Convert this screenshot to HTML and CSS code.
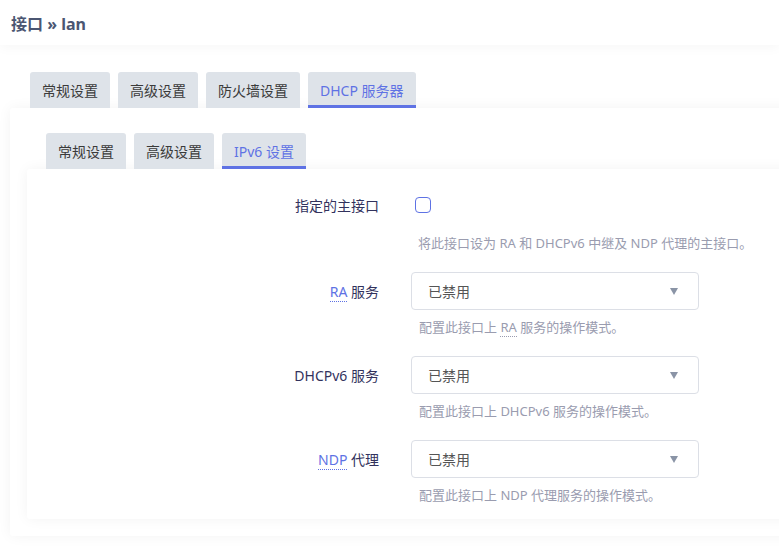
FILE: index.html
```html
<!DOCTYPE html>
<html lang="zh-CN">
<head>
<meta charset="utf-8">
<title>接口 » lan</title>
<link rel="stylesheet" href="styles.css">
</head>
<body>
<header class="page-header">
  <h2 class="title">接口 » lan</h2>
</header>
<main class="main">
  <ul class="tabs tabs-outer">
    <li class="tab">常规设置</li>
    <li class="tab">高级设置</li>
    <li class="tab">防火墙设置</li>
    <li class="tab active">DHCP 服务器</li>
  </ul>
  <section class="panel outer">
    <ul class="tabs tabs-inner">
      <li class="tab">常规设置</li>
      <li class="tab">高级设置</li>
      <li class="tab active">IPv6 设置</li>
    </ul>
    <div class="panel inner">
      <div class="row first">
        <label class="label"><span>指定的主接口</span></label>
        <div class="field">
          <div class="control check-line"><span class="checkbox"></span></div>
          <div class="desc desc-check">将此接口设为 RA 和 DHCPv6 中继及 NDP 代理的主接口。</div>
        </div>
      </div>
      <div class="row">
        <label class="label"><span><abbr>RA</abbr> 服务</span></label>
        <div class="field">
          <div class="control select"><span>已禁用</span><span class="arrow"></span></div>
          <div class="desc">配置此接口上 <abbr class="muted">RA</abbr> 服务的操作模式。</div>
        </div>
      </div>
      <div class="row">
        <label class="label"><span>DHCPv6 服务</span></label>
        <div class="field">
          <div class="control select"><span>已禁用</span><span class="arrow"></span></div>
          <div class="desc">配置此接口上 DHCPv6 服务的操作模式。</div>
        </div>
      </div>
      <div class="row">
        <label class="label"><span><abbr>NDP</abbr> 代理</span></label>
        <div class="field">
          <div class="control select"><span>已禁用</span><span class="arrow"></span></div>
          <div class="desc">配置此接口上 NDP 代理服务的操作模式。</div>
        </div>
      </div>
    </div>
  </section>
</main>
</body>
</html>
```
FILE: styles.css
```css
html, body {
  margin: 0;
  padding: 0;
  overflow: hidden;
  background: #fff;
}
body {
  font-family: "Noto Sans", "Noto Sans CJK SC", sans-serif;
  font-size: 14px;
  color: #32325d;
  width: 779px;
  height: 558px;
}
.page-header {
  height: 45px;
  background: #fff;
  box-shadow: 0 2px 12px rgba(0, 0, 0, 0.04);
  display: flex;
  align-items: center;
  padding-left: 11px;
  position: relative;
  z-index: 2;
}
.title {
  margin: 0;
  font-size: 16px;
  font-weight: 700;
  color: #4b5672;
}
.main {
  padding: 27px 0 0 10px;
  width: 800px;
}
.tabs {
  list-style: none;
  margin: 0;
  padding: 0;
  display: flex;
  gap: 8px;
}
.tabs-outer { margin-left: 20px; }
.tabs-inner { margin-left: 19px; }
.tab {
  height: 36px;
  box-sizing: border-box;
  padding: 0 12px;
  background: #dee3e9;
  border-radius: 3px 3px 0 0;
  display: flex;
  align-items: center;
  color: #3a3a3a;
  font-size: 14px;
}
.tab.active {
  color: #5e72e4;
  border-bottom: 3px solid #5e72e4;
  padding-top: 3px;
}
.panel {
  background: #fff;
  border-radius: 3px;
  box-shadow: 0 0 14px rgba(0, 0, 0, 0.05);
}
.outer {
  padding: 25px 0 17px 17px;
}
.inner {
  padding: 17px 0 15px 0;
}
.row {
  display: flex;
  margin-top: 20px;
}
.row.first { margin-top: 0; }
.label {
  width: 352px;
  flex: none;
  height: 38px;
  display: flex;
  align-items: center;
  justify-content: flex-end;
  color: #32325d;
  font-size: 14px;
}
.field {
  margin-left: 32px;
}
.control {
  height: 38px;
  box-sizing: border-box;
}
.check-line {
  display: flex;
  align-items: center;
  padding-left: 4px;
}
.checkbox {
  width: 16px;
  height: 16px;
  box-sizing: border-box;
  border: 1.5px solid #5e72e4;
  border-radius: 4px;
  display: block;
}
.select {
  width: 288px;
  border: 1px solid #dcdfe6;
  border-radius: 4px;
  display: flex;
  align-items: center;
  justify-content: space-between;
  padding: 0 20px 0 16px;
  color: #555;
  font-size: 14px;
}
.arrow {
  width: 0;
  height: 0;
  border-left: 4px solid transparent;
  border-right: 4px solid transparent;
  border-top: 7px solid #8a94a6;
}
.desc {
  margin-top: 8px;
  line-height: 18px;
  color: #9a9caf;
  padding-left: 8px;
  font-size: 13px;
}
.desc-check {
  margin-top: 10px;
  padding-left: 7px;
}
abbr {
  color: #5e72e4;
  text-decoration: none;
  border-bottom: 1px dotted #5e72e4;
}
abbr.muted {
  color: #9a9caf;
  border-bottom-color: #9a9caf;
}
```
